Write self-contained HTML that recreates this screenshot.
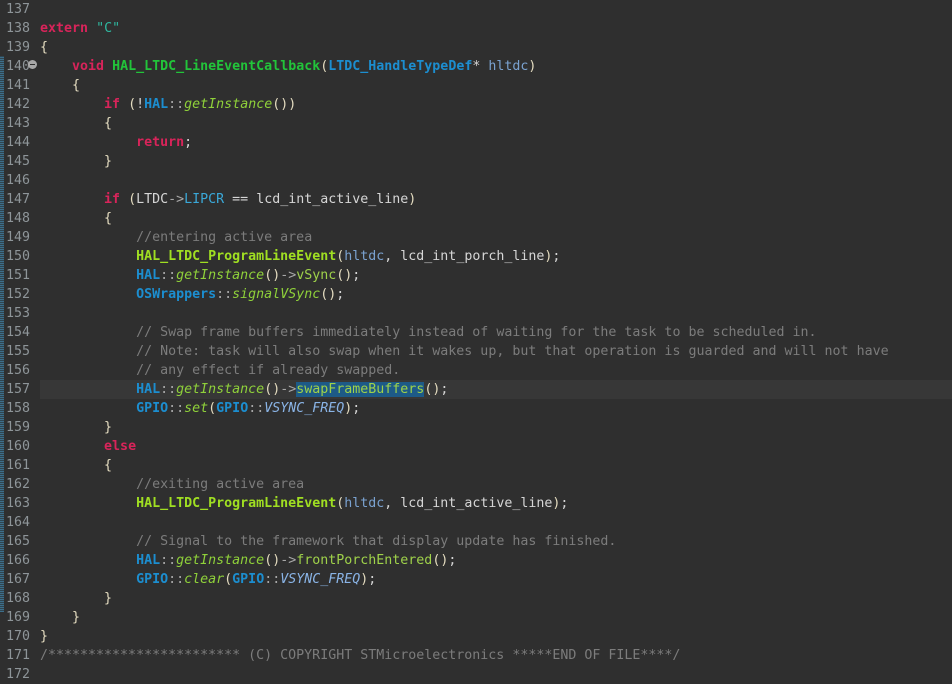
<!DOCTYPE html>
<html><head><meta charset="utf-8"><style>
html,body{margin:0;padding:0;background:#2f2f2f;width:952px;height:671px;overflow:hidden}
#w{position:absolute;left:0;top:0px;width:952px;font-family:"DejaVu Sans Mono","Liberation Mono",monospace;font-size:13.3px;color:#d6d6d6}
.l{height:19px;line-height:19px;white-space:pre;position:relative}
.n{position:absolute;left:6px;width:30px;color:#8e9599}
.c{position:absolute;left:40px}
.cur{position:absolute;left:40px;right:0;top:0;bottom:0;background:#373737}
.k{color:#d8245a;font-weight:bold}
.s{color:#2fb8a0}
.fd{color:#22c43a;font-weight:bold}
.fc{color:#a0df22;font-weight:bold}
.t{color:#1c8ed0;font-weight:bold}
.p{color:#e4dcc0}
.op{color:#a8a8a8}
.pa{color:#7aa2d0}
.gi{color:#8fd13a;font-style:italic}
.m{color:#9fd24a}
.ci{color:#8ab4e6;font-style:italic}
.fl{color:#3aa8d8}
.cm{color:#7c7c7c}
.sel{background:#1d5a87;color:#9fd24a}
#strip{position:absolute;left:0;top:56px;width:4px;height:556px;background:repeating-linear-gradient(0deg,#3d6e8a 0 1px,#2f4550 1px 2px)}
#fold{position:absolute;left:28px;top:60px;width:9px;height:9px;border-radius:50%;background:#a8a8a8}
#fold:after{content:"";position:absolute;left:2px;top:4px;width:5px;height:1px;background:#2f2f2f}
</style></head><body>
<div id="strip"></div>
<div id="w">
<div class="l"><span class="n">137</span></div>
<div class="l"><span class="n">138</span><span class="c"><span class="k">extern</span> <span class="s">"C"</span></span></div>
<div class="l"><span class="n">139</span><span class="c"><span class="p">{</span></span></div>
<div class="l"><span class="n">140</span><span class="c">    <span class="k">void</span> <span class="fd">HAL_LTDC_LineEventCallback</span><span class="p">(</span><span class="t">LTDC_HandleTypeDef</span>* <span class="pa">hltdc</span><span class="p">)</span></span></div>
<div class="l"><span class="n">141</span><span class="c">    <span class="p">{</span></span></div>
<div class="l"><span class="n">142</span><span class="c">        <span class="k">if</span> <span class="p">(</span>!<span class="t">HAL</span><span class="op">::</span><span class="gi">getInstance</span><span class="p">())</span></span></div>
<div class="l"><span class="n">143</span><span class="c">        <span class="p">{</span></span></div>
<div class="l"><span class="n">144</span><span class="c">            <span class="k">return</span>;</span></div>
<div class="l"><span class="n">145</span><span class="c">        <span class="p">}</span></span></div>
<div class="l"><span class="n">146</span></div>
<div class="l"><span class="n">147</span><span class="c">        <span class="k">if</span> <span class="p">(</span>LTDC<span class="op">-&gt;</span><span class="fl">LIPCR</span> == lcd_int_active_line<span class="p">)</span></span></div>
<div class="l"><span class="n">148</span><span class="c">        <span class="p">{</span></span></div>
<div class="l"><span class="n">149</span><span class="c">            <span class="cm">//entering active area</span></span></div>
<div class="l"><span class="n">150</span><span class="c">            <span class="fc">HAL_LTDC_ProgramLineEvent</span><span class="p">(</span><span class="pa">hltdc</span>, lcd_int_porch_line<span class="p">)</span>;</span></div>
<div class="l"><span class="n">151</span><span class="c">            <span class="t">HAL</span><span class="op">::</span><span class="gi">getInstance</span><span class="p">()</span><span class="op">-&gt;</span><span class="m">vSync</span><span class="p">()</span>;</span></div>
<div class="l"><span class="n">152</span><span class="c">            <span class="t">OSWrappers</span><span class="op">::</span><span class="gi">signalVSync</span><span class="p">()</span>;</span></div>
<div class="l"><span class="n">153</span></div>
<div class="l"><span class="n">154</span><span class="c">            <span class="cm">// Swap frame buffers immediately instead of waiting for the task to be scheduled in.</span></span></div>
<div class="l"><span class="n">155</span><span class="c">            <span class="cm">// Note: task will also swap when it wakes up, but that operation is guarded and will not have</span></span></div>
<div class="l"><span class="n">156</span><span class="c">            <span class="cm">// any effect if already swapped.</span></span></div>
<div class="l"><span class="cur"></span><span class="n">157</span><span class="c">            <span class="t">HAL</span><span class="op">::</span><span class="gi">getInstance</span><span class="p">()</span><span class="op">-&gt;</span><span class="sel">swapFrameBuffers</span><span class="p">()</span>;</span></div>
<div class="l"><span class="n">158</span><span class="c">            <span class="t">GPIO</span><span class="op">::</span><span class="gi">set</span><span class="p">(</span><span class="t">GPIO</span><span class="op">::</span><span class="ci">VSYNC_FREQ</span><span class="p">)</span>;</span></div>
<div class="l"><span class="n">159</span><span class="c">        <span class="p">}</span></span></div>
<div class="l"><span class="n">160</span><span class="c">        <span class="k">else</span></span></div>
<div class="l"><span class="n">161</span><span class="c">        <span class="p">{</span></span></div>
<div class="l"><span class="n">162</span><span class="c">            <span class="cm">//exiting active area</span></span></div>
<div class="l"><span class="n">163</span><span class="c">            <span class="fc">HAL_LTDC_ProgramLineEvent</span><span class="p">(</span><span class="pa">hltdc</span>, lcd_int_active_line<span class="p">)</span>;</span></div>
<div class="l"><span class="n">164</span></div>
<div class="l"><span class="n">165</span><span class="c">            <span class="cm">// Signal to the framework that display update has finished.</span></span></div>
<div class="l"><span class="n">166</span><span class="c">            <span class="t">HAL</span><span class="op">::</span><span class="gi">getInstance</span><span class="p">()</span><span class="op">-&gt;</span><span class="m">frontPorchEntered</span><span class="p">()</span>;</span></div>
<div class="l"><span class="n">167</span><span class="c">            <span class="t">GPIO</span><span class="op">::</span><span class="gi">clear</span><span class="p">(</span><span class="t">GPIO</span><span class="op">::</span><span class="ci">VSYNC_FREQ</span><span class="p">)</span>;</span></div>
<div class="l"><span class="n">168</span><span class="c">        <span class="p">}</span></span></div>
<div class="l"><span class="n">169</span><span class="c">    <span class="p">}</span></span></div>
<div class="l"><span class="n">170</span><span class="c"><span class="p">}</span></span></div>
<div class="l"><span class="n">171</span><span class="c"><span class="cm">/************************ (C) COPYRIGHT STMicroelectronics *****END OF FILE****/</span></span></div>
<div class="l"><span class="n">172</span></div>
</div>
<div id="fold"></div>
</body></html>
